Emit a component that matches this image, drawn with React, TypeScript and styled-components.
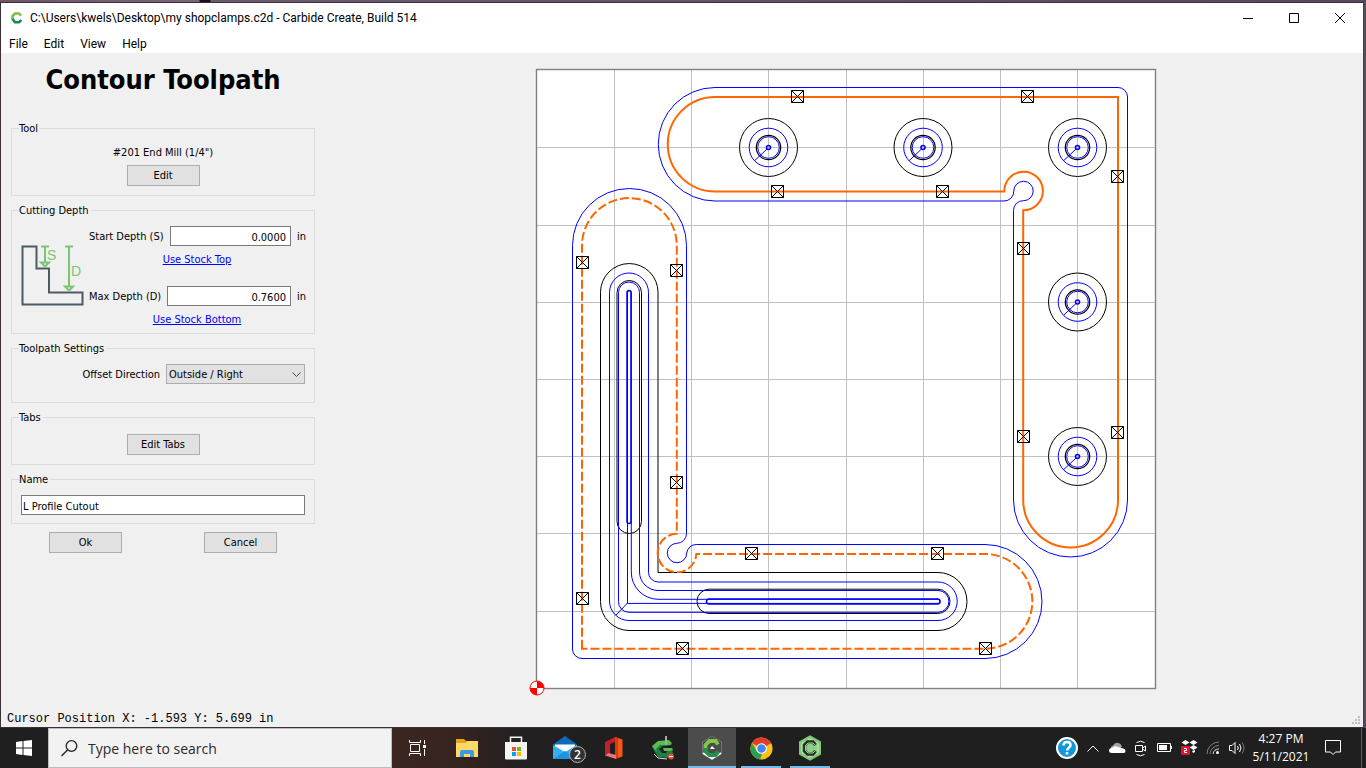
import React, { useState } from "react";
import styled, { createGlobalStyle } from "styled-components";

const UI = `"DejaVu Sans Condensed", "DejaVu Sans", sans-serif`;
const SHELL = `"Open Sans", "Noto Sans", sans-serif`;
const CAPTION = `Roboto, "Open Sans", sans-serif`;

const GlobalStyle = createGlobalStyle`
  * { box-sizing: border-box; }
  body { margin: 0; background: #1f1f1f; }
  button, input, select { font: inherit; color: inherit; margin: 0; }
`;

const Desktop = styled.div`
  display: flex;
  flex-direction: column;
  min-height: 100vh;
  padding-top: 2px;
  background: linear-gradient(90deg, #6d5566, #7a6678 199px, #17121a 200px, #17121a 210px, #6d5a70 211px, #56495e);
`;

const Window = styled.div`
  flex: 1;
  display: flex;
  flex-direction: column;
  margin-right: 2px;
  border: 1px solid #3b3038;
  border-right-color: #4a4050;
  background: #f0f0f0;
  color: #000;
`;

const TitleBar = styled.header`
  display: flex;
  align-items: center;
  height: 30px;
  padding-left: 9px;
  gap: 6px;
  background: #fff;
  font: 12px/16px ${CAPTION};
`;

const TitleText = styled.span`
  flex: 1;
  white-space: nowrap;
`;

const WindowButtons = styled.div`
  display: flex;
`;

const WindowButton = styled.button`
  width: 46px;
  height: 30px;
  padding: 0;
  border: 0;
  background: none;
  display: grid;
  place-items: center;
`;

const MenuBar = styled.nav`
  display: flex;
  height: 20px;
  background: #fff;
  font: 12px/20px ${CAPTION};
`;

const MenuItem = styled.button`
  padding: 1px 8px 0;
  border: 0;
  background: none;
`;

const Body = styled.main`
  flex: 1;
  display: flex;
  min-height: 0;
`;

const Panel = styled.form`
  width: 326px;
  flex: none;
  display: flex;
  flex-direction: column;
  gap: 7px;
  padding: 9px 12px 0 10px;
  font: 11px/16px ${UI};
`;

const Heading = styled.h1`
  margin: 0 0 16px;
  height: 36px;
  font: bold 27px/36px ${UI};
  text-align: center;
  white-space: nowrap;
`;

const Group = styled.fieldset<{ $height: number; $pad: number }>`
  display: flex;
  flex-direction: column;
  align-items: center;
  gap: 4px;
  min-width: 0;
  height: ${(p) => p.$height}px;
  margin: 0;
  padding: ${(p) => p.$pad}px 9px 0;
  border: 1px solid #dcdcdc;
`;

const Legend = styled.legend`
  height: 14px;
  margin-left: -2px;
  padding: 0 2px 0 0;
`;

const PushButton = styled.button`
  width: 73px;
  height: 21px;
  padding: 1px 0 0;
  border: 1px solid #adadad;
  background: #e1e1e1;
`;

const DepthLayout = styled.div`
  display: flex;
  align-self: stretch;
  gap: 5px;
`;

const DiagramSlot = styled.div`
  display: flex;
  padding-top: 17px;
`;

const DepthFields = styled.div`
  flex: 1;
  display: flex;
  flex-direction: column;
`;

const FieldRow = styled.div`
  display: flex;
  align-items: center;
  align-self: stretch;
  justify-content: flex-end;
  gap: 6px;
  height: 20px;
  white-space: nowrap;
`;

const FieldLabel = styled.label`
  padding-top: 2px;
`;

const Unit = styled.span`
  width: 8px;
  padding-top: 2px;
`;

const TextBox = styled.input<{ $number?: boolean }>`
  flex: 1;
  min-width: 0;
  width: 100%;
  height: 20px;
  padding: 2px ${(p) => (p.$number ? 4 : 1)}px 0;
  border: 1px solid #7a7a7a;
  border-radius: 0;
  background: #fff;
  text-align: ${(p) => (p.$number ? "right" : "left")};
`;

const StockLink = styled.a`
  align-self: center;
  margin: 6px 0 18px;
  color: #0000ff;
`;

const SelectWrap = styled.div`
  position: relative;
  width: 139px;
  height: 20px;
`;

const Select = styled.select`
  appearance: none;
  width: 100%;
  height: 20px;
  padding: 2px 2px 0;
  border: 1px solid #adadad;
  border-radius: 0;
  background: #e1e1e1;
`;

const SelectArrow = styled.svg`
  position: absolute;
  right: 4px;
  top: 8px;
  pointer-events: none;
`;

const Actions = styled.div`
  display: grid;
  grid-template-columns: 1fr 1fr;
  gap: 6px;
  justify-items: center;
  padding-top: 1px;
`;

const Drawing = styled.svg`
  flex: 1;
  min-width: 0;
  width: 100%;
`;

const StatusBar = styled.footer`
  display: flex;
  align-items: center;
  justify-content: space-between;
  height: 20px;
  padding: 3px 0 0 6px;
  font: 12px/16px "Liberation Mono", monospace;
`;

const Grip = styled.svg`
  align-self: flex-end;
`;

const Taskbar = styled.footer`
  display: flex;
  height: 40px;
  background: linear-gradient(90deg, #1f1f20 0, #1f1f20 380px, #3b2620 392px, #38251f 445px, #232021 520px, #1f1f20 600px);
  color: #fff;
  font-family: ${SHELL};
`;

const TaskCell = styled.button<{ $active?: boolean; $running?: boolean }>`
  position: relative;
  width: 48px;
  height: 40px;
  padding: 0;
  border: 0;
  display: grid;
  place-items: center;
  background: ${(p) => (p.$active ? "#4c4c4c" : "none")};
  &::after {
    content: "";
    display: ${(p) => (p.$active || p.$running ? "block" : "none")};
    position: absolute;
    bottom: 0;
    left: ${(p) => (p.$active ? 0 : 4)}px;
    right: ${(p) => (p.$active ? 0 : 4)}px;
    height: 2px;
    background: #76b9ed;
  }
`;

const Search = styled.label`
  display: flex;
  align-items: center;
  gap: 10px;
  width: 344px;
  height: 40px;
  padding-left: 12px;
  border: 1px solid #bdbdbd;
  background: #f2f2f2;
  color: #2b2b2b;
`;

const SearchInput = styled.input`
  flex: 1;
  min-width: 0;
  padding: 0;
  border: 0;
  outline: 0;
  background: none;
  font-size: 14px;
  &::placeholder { color: #2b2b2b; opacity: 1; }
`;

const TaskApps = styled.div`
  flex: 1;
  display: flex;
  gap: 1px;
  padding-left: 2px;
`;

const Badge = styled.span`
  position: absolute;
  left: 28px;
  top: 18px;
  width: 17px;
  height: 17px;
  border: 1px solid #b4b4b4;
  border-radius: 50%;
  background: #333;
  font-size: 12px;
  font-weight: 600;
  line-height: 15px;
  text-align: center;
`;

const Tray = styled.div`
  display: flex;
  align-items: center;
`;

const TrayButton = styled.button<{ $w?: number }>`
  width: ${(p) => p.$w ?? 24}px;
  height: 40px;
  padding: 0;
  border: 0;
  background: none;
  display: grid;
  place-items: center;
`;

const Clock = styled.time`
  width: 64px;
  font-size: 12px;
  line-height: 18px;
  text-align: center;
  white-space: nowrap;
`;

const ShowDesktop = styled.div`
  width: 5px;
  height: 40px;
  margin-left: 8px;
  border-left: 1px solid #5c5c5c;
`;

const GRID_X = [614, 691, 768, 846, 923, 1000, 1077];
const GRID_Y = [147, 225, 302, 379, 456, 533, 611];
const HOLES = [[768.5, 147.5], [923, 147.5], [1077.5, 147.5], [1077.5, 302], [1077.5, 456.5]];
const TABS = [
  [797, 96], [1027, 96], [777, 191], [942, 191], [1117, 176], [1023, 248], [1023, 436], [1117, 432],
  [582, 262], [676, 270], [676, 482], [582, 598], [682, 648], [985, 648], [751, 553], [937, 553],
];

const Workpiece = () => (
  <Drawing viewBox="327 53 1036 654" role="img" aria-label="Toolpath preview">
    <rect x="536.5" y="69.5" width="619" height="619" fill="#fff" />
    <g stroke="#c0c0c0">
      {GRID_X.map((x) => <path key={x} d={`M${x + 0.5} 70V688`} />)}
      {GRID_Y.map((y) => <path key={y} d={`M537 ${y + 0.5}H1155`} />)}
    </g>
    <rect x="536.5" y="69.5" width="619" height="619" fill="none" stroke="#808080" strokeWidth="1.4" />
    <g fill="none" stroke="#000">
      <path d="M600.5 292.3A28.7 28.7 0 0 1 658 292.3V572.5H938A29 29 0 0 1 938 630.5H629A28.8 28.8 0 0 1 600.5 601.5Z" />
      <rect x="617" y="280.5" width="24.5" height="253" rx="12.2" />
      <rect x="697" y="589.2" width="253" height="24.3" rx="12.2" />
      {HOLES.map(([x, y]) => (
        <g key={`${x}-${y}`}>
          <circle cx={x} cy={y} r="29" />
          <circle cx={x} cy={y} r="12.2" strokeWidth="1.2" />
        </g>
      ))}
    </g>
    <g fill="none" stroke="#0000ff">
      <path d="M572.5 245.5A57 57 0 0 1 686.5 245.5V533.6A9.7 9.7 0 0 1 676.8 543.3A9.7 9.7 0 1 0 686.7 553A9.7 9.7 0 0 1 696.3 544.5H985A57 57 0 0 1 985 658.5H582A9.5 9.5 0 0 1 572.5 649Z" />
      <path d="M715 87.5H1118A9.5 9.5 0 0 1 1127.5 97V500A57 57 0 0 1 1013.5 500V210.4A9.7 9.7 0 0 1 1023.4 200.7A9.7 9.7 0 1 0 1013.8 191A9.7 9.7 0 0 1 1004 201H715A56.7 56.7 0 0 1 715 87.5Z" />
      <path d="M609.5 292.5A19.5 19.5 0 0 1 648.5 292.5V572.3A9.7 9.7 0 0 0 658 582H938A19.2 19.2 0 0 1 938 620.5H629A19.5 19.5 0 0 1 609.5 601Z" />
      <path d="M618.5 292.5A10.5 10.5 0 0 1 639.5 292.5V572A18.7 18.7 0 0 0 658 590.5H938A10.8 10.8 0 0 1 938 612.3H629A10.5 10.5 0 0 1 618.5 601.5Z" />
      <path d="M627.5 292.5A1.9 1.9 0 0 1 631.3 292.5V572A27 27 0 0 0 658 599.3H938A2 2 0 0 1 938 603.4H627.5Z" />
      <path d="M615.8 615.3L627.5 603" />
      <rect x="627" y="290.5" width="4" height="233" rx="2" strokeWidth="1.5" />
      <rect x="706.5" y="599" width="233.5" height="5" rx="2.5" strokeWidth="1.5" />
      {HOLES.map(([x, y]) => (
        <g key={`${x}-${y}`}>
          <circle cx={x} cy={y} r="19.3" />
          <circle cx={x} cy={y} r="10.8" />
          <circle cx={x} cy={y} r="2" strokeWidth="1.6" />
          <path d={`M${x - 13.7} ${y + 13}L${x - 1.5} ${y + 1.5}`} />
        </g>
      ))}
    </g>
    <g fill="none" stroke="#ff6600" strokeWidth="2">
      <path d="M715 97H1118V500A47.4 47.4 0 0 1 1023.2 500V210.3A19.3 19.3 0 1 0 1004.3 191.5H715A47.2 47.2 0 0 1 715 97Z" />
      <path strokeDasharray="9 3" d="M582 648.7V245.5A47.4 47.4 0 0 1 676.8 245.5V533.7A19.3 19.3 0 1 0 696.3 554H985A47.3 47.3 0 0 1 985 648.7H582Z" />
    </g>
    <g fill="none" stroke="#000">
      {TABS.map(([x, y]) => (
        <path key={`${x}-${y}`} d={`M${x - 5.5} ${y - 5.5}h12v12h-12zl12 12m0 -12l-12 12`} />
      ))}
    </g>
    <circle cx="537" cy="688" r="7" fill="#fff" stroke="#f00" />
    <path fill="#f00" d="M537 688V681A7 7 0 0 1 544 688ZM537 688V695A7 7 0 0 1 530 688Z" />
  </Drawing>
);

const DepthDiagram = () => (
  <svg width="63" height="64" viewBox="0 0 63 64" fill="none" aria-hidden="true">
    <path d="M1.5 3.5H15.5V25.5H28V49.5H61.5V61.5H1.5Z" stroke="#4c5a64" strokeWidth="2" />
    <g stroke="#7cc576" strokeWidth="2">
      <path d="M20 3.5h8M24 3.5v16M20 19.5h8l-4 4z" />
      <path d="M44 3.5h8M48 3.5v39M44 43.5h8l-4 4z" />
    </g>
    <g fill="#7cc576" fontFamily="Liberation Sans, sans-serif" fontSize="14">
      <text x="26" y="17">S</text>
      <text x="50" y="33">D</text>
    </g>
  </svg>
);

const SmallLogo = () => (
  <svg width="14" height="14" viewBox="0 0 14 14" fill="none" aria-hidden="true">
    <path d="M11 4.7 9 2.5H5L2.5 5v3.8" stroke="#7ac043" strokeWidth="2.6" />
    <path d="M2.5 8 5 11.3h4l2.4-2.2" stroke="#118a4d" strokeWidth="2.6" />
  </svg>
);

const Explorer = () => (
  <svg width="22" height="20" viewBox="0 0 22 20">
    <path d="M0 1h8l2 2h12v4H0z" fill="#e8a317" />
    <path d="M0 5h10l1-2h11v16H0z" fill="#ffd867" />
    <path d="M4 19v-5q0-2 2-2h10q2 0 2 2v5h-4v-3H8v3z" fill="#3e9ade" />
  </svg>
);

const Store = () => (
  <svg width="24" height="26" viewBox="0 0 24 26">
    <path d="M6.5 7V2.2h11V7" fill="none" stroke="#f4f4f4" strokeWidth="1.5" />
    <path d="M1 7h22v16.5q0 1-1 1H2q-1 0-1-1z" fill="#f4f4f4" />
    <path d="M8 12h4v4H8z" fill="#f25022" /><path d="M13 12h4v4h-4z" fill="#7fba00" />
    <path d="M8 17h4v4H8z" fill="#00a4ef" /><path d="M13 17h4v4h-4z" fill="#ffb900" />
  </svg>
);

const Mail = () => (
  <svg width="26" height="24" viewBox="0 0 26 24">
    <path d="M1 8.5 13 0l12 8.5v14H1z" fill="#0f6cbd" />
    <path d="M3 8.5h20V15l-10 3L3 15z" fill="#fff" />
    <path d="M1 9l12 7 12-7v14H1z" fill="#35b0ee" />
    <path d="M1 23l12-8 12 8z" fill="#1d94df" />
  </svg>
);

const Office = () => (
  <svg width="20" height="24" viewBox="0 0 20 24">
    <path d="M1 6 11 1v5L6 8v9l-5 2.5z" fill="#c41e2a" />
    <path d="M11 1l7.5 2.5v17L11 23z" fill="#f25a13" />
    <path d="M11 1l3 1v20l-3 1z" fill="#dc3a08" />
    <path d="M1 19.5 4.5 17 12 19v4z" fill="#e8757d" />
  </svg>
);

const Motion = () => (
  <svg width="24" height="25" viewBox="0 0 24 25">
    <path d="M1 11 7 6l11-1 3 4-9 1-4 3 3 4h4l1-2h-3v-3h8l1 6-4 4-11-1z" fill="#1d7f41" />
    <path d="M1 10 7 5l11-1 3 3-2 2-10 0-4 4 1 3zM12 12h9l1 2-3 1h-6z" fill="#58bd4b" />
    <path d="M14 0h2v8l-1 2-1-2z" fill="#a6abad" />
    <path d="M3 18l4 4 9 1" fill="none" stroke="#ddd" />
    <circle cx="20" cy="20.5" r="3" fill="#e2522d" /><path d="M18 20.500h4" stroke="#fff" />
  </svg>
);

const Create = () => (
  <svg width="22" height="26" viewBox="0 0 22 26" fill="none">
    <path d="M11 1 20.5 7v12L11 24.5 1.5 19V7z" stroke="#737373" />
    <path d="M2 18l9 5.5 9-5.5" stroke="#fff" strokeWidth="2" />
    <path d="M17 9.5 14.5 6h-6L4.500 10v6" stroke="#83c64a" strokeWidth="3.8" />
    <path d="M4.5 13v3l4 4h6l3-3.5" stroke="#22924b" strokeWidth="3.8" />
    <path d="m11 11 3 3H9z" fill="#fff" />
  </svg>
);

const Chrome = () => (
  <svg width="23" height="23" viewBox="0 0 24 24">
    <circle cx="12" cy="12" r="11.5" fill="#fbc116" />
    <path d="M2 6.3A11.5 11.5 0 0 1 22 6.5L12 12z" fill="#e33b2e" />
    <path d="M2 6.3 7.3 15l5.5 2-2.3 6.4A11.5 11.5 0 0 1 2 6.3z" fill="#2ca14c" />
    <circle cx="12" cy="12" r="5.6" fill="#fff" /><circle cx="12" cy="12" r="4.5" fill="#4285f4" />
  </svg>
);

const Carbide = () => (
  <svg width="24" height="26" viewBox="0 0 24 26" fill="none">
    <path d="M12 1.5 22 7v12l-10 5.5L2 19V7z" fill="#8fce88" stroke="#7fc878" strokeWidth="2" />
    <path d="M12 4 20 8.5v9L12 22l-8-4.5v-9z" stroke="#c5e6c0" />
    <path d="M17.5 10 15 7H9.5L6.5 10v6l3 3H15l2.5-3" stroke="#263126" strokeWidth="3.5" />
    <path d="M17 10 15 8h-5l-2.5 2.5v5L10 18h5l2-2" stroke="#a3d39c" />
  </svg>
);

const TaskView = () => (
  <svg width="18" height="16" viewBox="0 0 18 16" fill="none" stroke="#fff">
    <path d="M.5 0v2.5h11V0M.5 16v-2.5h11V16M1.5 4.500h9v7h-9zM15.5 0v4M15.5 9v7" />
    <path d="M14 5h3v3h-3z" fill="#fff" stroke="none" />
  </svg>
);

const HelpIcon = () => (
  <svg width="22" height="22" viewBox="0 0 22 22">
    <circle cx="11" cy="11" r="10" fill="#1496db" stroke="#fff" strokeWidth="2" />
    <path d="M7.5 8.5q0-3.5 3.5-3.5t3.5 3q0 1.5-1.700 2.700T11 13.5" fill="none" stroke="#fff" strokeWidth="2.5" />
    <path d="M9.700 15h2.600v2.500H9.700z" fill="#fff" />
  </svg>
);

const Cloud = () => (
  <svg width="17" height="12" viewBox="0 0 17 12">
    <path d="M2 8Q1 4 4 3.500 6 0 9.500 1q3 1 3.500 4z" fill="#a5a5a5" />
    <path d="M3 11q-3 0-3-2.500T3 6q3-3 6.500-.5 1-1 3 .5 4 .5 4 3T14 11z" fill="#fff" />
  </svg>
);

const MeetNow = () => (
  <svg width="14" height="17" viewBox="0 0 14 17" fill="none" stroke="#fff">
    <path d="M1.5 5.500h7v6h-7zM8.500 8l3-2v5l-3-2M2.500 2.500Q6.500 0 10.500 2.500M2.500 14.500q4 2.500 8 0" />
  </svg>
);

const Battery = () => (
  <svg width="16" height="10" viewBox="0 0 16 10" fill="none" stroke="#fff">
    <path d="M.5.5h13v8H.5zM14.500 3v3" /><path d="M2 2h8v5H2z" fill="#fff" stroke="none" />
  </svg>
);

const Dropbox = () => (
  <svg width="17" height="16" viewBox="0 0 17 16">
    <path d="M4.500 0 8.500 2.500l-4 2.500-4-2.500zM12.500 0l4 2.500-4 2.500-4-2.500zM12.500 5l4 2.500-4 2.500-4-2.500zM11 11l3-1v2l-2 1z" fill="#fff" />
    <rect y="6" width="9" height="9" rx="1" fill="#e0142c" />
    <path d="M3 8.500h2.500v2H3.500v2H6" fill="none" stroke="#fff" />
  </svg>
);

const Wifi = () => (
  <svg width="14" height="14" viewBox="0 0 14 14" fill="none" stroke="#808080">
    <path d="M1 13A12 12 0 0 1 13 1M4 13A9 9 0 0 1 13 4.500" /><path d="M7 13a6 6 0 0 1 6-5" stroke="#ddd" />
    <circle cx="11.500" cy="11.500" r="1.500" fill="#fff" stroke="none" />
  </svg>
);

const Volume = () => (
  <svg width="17" height="14" viewBox="0 0 17 14" fill="none" stroke="#fff">
    <path d="M.5 4.500h2.500l3-3v11l-3-3H.5zM8.500 5q1.500 2 0 4M10.500 3q3 4 0 8" />
    <path d="M13 1.500q4 5.500 0 11" stroke="#777" />
  </svg>
);

export default function App() {
  const [start, setStart] = useState("0.0000");
  const [max, setMax] = useState("0.7600");
  const [name, setName] = useState("L Profile Cutout");

  return (
    <>
      <GlobalStyle />
      <Desktop>
        <Window>
          <TitleBar>
            <SmallLogo />
            <TitleText>C:\Users\kwels\Desktop\my shopclamps.c2d - Carbide Create, Build 514</TitleText>
            <WindowButtons>
              <WindowButton aria-label="Minimize">
                <svg width="10" height="10" stroke="#000"><path d="M0 5.500h10" /></svg>
              </WindowButton>
              <WindowButton aria-label="Maximize">
                <svg width="10" height="10" fill="none" stroke="#000"><path d="M.5.5h9v9h-9z" /></svg>
              </WindowButton>
              <WindowButton aria-label="Close">
                <svg width="10" height="10" stroke="#000"><path d="M0 0l10 10M10 0 0 10" /></svg>
              </WindowButton>
            </WindowButtons>
          </TitleBar>
          <MenuBar>
            {["File", "Edit", "View", "Help"].map((m) => <MenuItem key={m}>{m}</MenuItem>)}
          </MenuBar>
          <Body>
            <Panel onSubmit={(e) => e.preventDefault()}>
              <Heading>Contour Toolpath</Heading>
              <Group $height={75} $pad={10}>
                <Legend>Tool</Legend>
                <span>#201 End Mill (1/4")</span>
                <PushButton type="button">Edit</PushButton>
              </Group>
              <Group $height={131} $pad={9}>
                <Legend>Cutting Depth</Legend>
                <DepthLayout>
                  <DiagramSlot><DepthDiagram /></DiagramSlot>
                  <DepthFields>
                    <FieldRow>
                      <FieldLabel htmlFor="start">Start Depth (S)</FieldLabel>
                      <TextBox id="start" $number value={start} onChange={(e) => setStart(e.target.value)} />
                      <Unit>in</Unit>
                    </FieldRow>
                    <StockLink href="#top">Use Stock Top</StockLink>
                    <FieldRow>
                      <FieldLabel htmlFor="max">Max Depth (D)</FieldLabel>
                      <TextBox id="max" $number value={max} onChange={(e) => setMax(e.target.value)} />
                      <Unit>in</Unit>
                    </FieldRow>
                    <StockLink href="#bottom">Use Stock Bottom</StockLink>
                  </DepthFields>
                </DepthLayout>
              </Group>
              <Group $height={62} $pad={9}>
                <Legend>Toolpath Settings</Legend>
                <FieldRow>
                  <FieldLabel htmlFor="offset">Offset Direction</FieldLabel>
                  <SelectWrap>
                    <Select id="offset" defaultValue="out">
                      <option value="out">Outside / Right</option>
                    </Select>
                    <SelectArrow width="9" height="6" fill="none" stroke="#444"><path d="M.5.5l4 4 4-4" /></SelectArrow>
                  </SelectWrap>
                </FieldRow>
              </Group>
              <Group $height={55} $pad={10}>
                <Legend>Tabs</Legend>
                <PushButton type="button">Edit Tabs</PushButton>
              </Group>
              <Group $height={52} $pad={9}>
                <Legend>Name</Legend>
                <FieldRow>
                  <TextBox aria-label="Name" value={name} onChange={(e) => setName(e.target.value)} />
                </FieldRow>
              </Group>
              <Actions>
                <PushButton>Ok</PushButton>
                <PushButton type="button">Cancel</PushButton>
              </Actions>
            </Panel>
            <Workpiece />
          </Body>
          <StatusBar>
            <span>Cursor Position X: -1.593 Y: 5.699 in</span>
            <Grip width="11" height="11" fill="#bfbfbf">
              <path d="M6 0h2v2H6zM3 3h2v2H3zM6 3h2v2H6zM0 6h2v2H0zM3 6h2v2H3zM6 6h2v2H6z" />
            </Grip>
          </StatusBar>
        </Window>
        <Taskbar>
          <TaskCell aria-label="Start">
            <svg width="16" height="16" viewBox="0 0 16 16" fill="#fff">
              <path d="M0 2l6.500-1v6.500H0zM7.500.900 16 0v7.500H7.500zM0 8.500h6.500V15L0 14zM7.500 8.500H16V16l-8.500-1z" />
            </svg>
          </TaskCell>
          <Search>
            <svg width="17" height="17" viewBox="0 0 17 17" fill="none" stroke="#222" strokeWidth="1.300">
              <circle cx="10.500" cy="6" r="5.300" /><path d="M6.700 9.800.5 16" />
            </svg>
            <SearchInput aria-label="Search" placeholder="Type here to search" />
          </Search>
          <TaskApps>
            <TaskCell aria-label="Task View"><TaskView /></TaskCell>
            <TaskCell aria-label="File Explorer"><Explorer /></TaskCell>
            <TaskCell aria-label="Microsoft Store"><Store /></TaskCell>
            <TaskCell aria-label="Mail"><Mail /><Badge>2</Badge></TaskCell>
            <TaskCell aria-label="Office"><Office /></TaskCell>
            <TaskCell aria-label="Carbide Motion"><Motion /></TaskCell>
            <TaskCell $active aria-label="Carbide Create"><Create /></TaskCell>
            <TaskCell $running aria-label="Chrome"><Chrome /></TaskCell>
            <TaskCell $running aria-label="Carbide 3D"><Carbide /></TaskCell>
          </TaskApps>
          <Tray>
            <TrayButton $w={28} aria-label="Help"><HelpIcon /></TrayButton>
            <TrayButton aria-label="Show hidden icons">
              <svg width="12" height="7" fill="none" stroke="#fff"><path d="M.5 6.500l5.500-5.500 5.500 5.500" /></svg>
            </TrayButton>
            <TrayButton aria-label="OneDrive"><Cloud /></TrayButton>
            <TrayButton aria-label="Meet Now"><MeetNow /></TrayButton>
            <TrayButton aria-label="Battery"><Battery /></TrayButton>
            <TrayButton aria-label="Dropbox"><Dropbox /></TrayButton>
            <TrayButton aria-label="Network"><Wifi /></TrayButton>
            <TrayButton aria-label="Volume"><Volume /></TrayButton>
            <Clock>4:27 PM<br />5/11/2021</Clock>
            <TrayButton $w={40} aria-label="Notifications">
              <svg width="16" height="16" viewBox="0 0 16 16" fill="none" stroke="#fff">
                <path d="M.5.5h15v11.500H10.500L8 14.500 5.500 12H.5z" />
              </svg>
            </TrayButton>
            <ShowDesktop />
          </Tray>
        </Taskbar>
      </Desktop>
    </>
  );
}
